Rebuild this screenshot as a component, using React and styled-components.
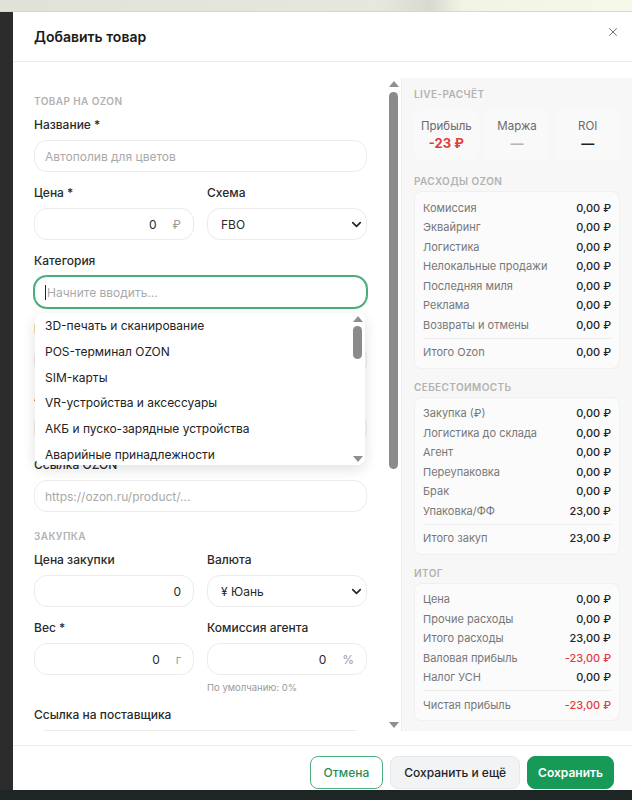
import React from 'react'
import styled, { createGlobalStyle } from 'styled-components'
import { X, ChevronDown } from 'lucide-react'

const GlobalStyle = createGlobalStyle`
  body {
    margin: 0;
    background: #2b2b2b;
    font-family: Inter, "Noto Sans", "Liberation Sans", sans-serif;
    color: #1f1f1f;
  }
  * { box-sizing: border-box; }
`

const Page = styled.div`
  width: 632px;
  height: 800px;
  display: flex;
  flex-direction: column;
  overflow: hidden;
`

const TopStrip = styled.div`
  height: 12px;
  flex-shrink: 0;
  background: linear-gradient(90deg, #e0e2d8 0%, #e6e8dd 60%, #d8dacf 68%, #f1f3e4 73%, #f6f8ea 100%);
  border-bottom: 1px solid #d6d8cf;
`

const Middle = styled.div`
  display: flex;
  height: 778px;
  flex-shrink: 0;
  overflow: hidden;
`

const Backdrop = styled.div`
  width: 13px;
  flex-shrink: 0;
  background: #2c2c2c;
`

const BottomStrip = styled.div`
  flex: 1;
  background: #1d2525;
`

const Modal = styled.div`
  flex: 1;
  min-width: 0;
  background: #fff;
  display: flex;
  flex-direction: column;
`

const Header = styled.div`
  height: 50px;
  flex-shrink: 0;
  display: flex;
  align-items: center;
  justify-content: space-between;
  padding: 0 12px 0 21px;
  border-bottom: 1px solid #ececec;
`

const Title = styled.h2`
  margin: 0;
  font-size: 14px;
  font-weight: 600;
  color: #1a1a1a;
`

const CloseButton = styled.button`
  border: none;
  background: none;
  padding: 0;
  margin-bottom: 9px;
  color: #666;
  display: flex;
  cursor: pointer;
`

const Body = styled.div`
  display: flex;
  height: 683px;
  flex-shrink: 0;
  padding: 16px 0 14px;
`

const FormArea = styled.div`
  width: 388px;
  flex-shrink: 0;
  display: flex;
`

const FormContent = styled.div`
  flex: 1;
  min-width: 0;
  overflow: hidden;
  padding: 16px 19px 0 21px;
  display: flex;
  flex-direction: column;
  gap: 17px;
`

/* scrollbar drawn by hand: the page is shot with native bars hidden */
const Rail = styled.div`
  width: 15px;
  flex-shrink: 0;
  display: flex;
  flex-direction: column;
  align-items: center;
  padding: 3px 0;
  background: ${p => p.$bg || '#fff'};
`

const Arrow = styled.span`
  width: 0;
  height: 0;
  flex-shrink: 0;
  border-left: 5px solid transparent;
  border-right: 5px solid transparent;
  ${p => p.$down ? 'border-top: 6px solid #8f8f8f;' : 'border-bottom: 6px solid #8f8f8f;'}
`

const Track = styled.div`
  flex: 1;
  width: 100%;
  display: flex;
  justify-content: center;
  padding-top: ${p => p.$offset}px;
`

const Thumb = styled.div`
  width: 9px;
  height: ${p => p.$size}px;
  border-radius: 5px;
  background: #8b8b8b;
`

const Section = styled.div`
  display: flex;
  flex-direction: column;
`

const SectionTitle = styled.div`
  font-size: 10px;
  line-height: 14px;
  font-weight: 600;
  letter-spacing: 0.4px;
  text-transform: uppercase;
  color: #b2b2b2;
  margin-bottom: ${p => p.$tight ? 3 : 9}px;
`

const Fields = styled.div`
  display: flex;
  flex-direction: column;
  gap: 13px;
`

const TwoCols = styled.div`
  display: grid;
  grid-template-columns: minmax(0, 1fr) minmax(0, 1fr);
  gap: 13px;
  align-items: start;
`

const Field = styled.div`
  display: flex;
  flex-direction: column;
  position: relative;
  min-width: 0;
`

const Label = styled.label`
  font-size: 12px;
  line-height: 16px;
  font-weight: 500;
  color: #2a2a2a;
  margin-bottom: 7px;
  white-space: nowrap;
`

const InputShell = styled.div`
  height: 32px;
  display: flex;
  align-items: center;
  padding: 0 12px 0 10px;
  border: 1px solid ${p => p.$focused ? '#48ad7d' : '#ebebeb'};
  box-shadow: ${p => p.$focused ? '0 0 0 1px #48ad7d' : 'none'};
  border-radius: 13px;
  background: #fff;
  font-size: 12px;
`

const TextInput = styled.input`
  flex: 1;
  width: 0;
  min-width: 0;
  border: none;
  outline: none;
  background: transparent;
  font: inherit;
  color: #2a2a2a;
  text-align: ${p => p.$align || 'left'};
  padding: 0;
  &::placeholder { color: #a9a9a9; }
`

const Suffix = styled.span`
  color: #9b9b9b;
  margin-left: 16px;
  font-size: 12px;
`

const Caret = styled.span`
  width: 1px;
  height: 15px;
  background: #222;
  margin-right: 1px;
`

const Placeholder = styled.span`
  color: #a9a9a9;
`

const SelectBox = styled.div`
  height: 32px;
  display: flex;
  align-items: center;
  justify-content: space-between;
  padding: 0 2px 0 13px;
  border: 1px solid #ebebeb;
  border-radius: 13px;
  font-size: 12px;
  color: #2a2a2a;
`

const Hint = styled.div`
  margin-top: 6px;
  font-size: 9.5px;
  line-height: 13px;
  color: #9a9a9a;
`

const Dropdown = styled.div`
  position: absolute;
  top: calc(100% + 5px);
  left: 1px;
  right: 2px;
  height: 152px;
  display: flex;
  overflow: hidden;
  background: #fff;
  border-radius: 8px;
  box-shadow: 0 4px 14px rgba(0, 0, 0, 0.13);
  z-index: 5;
`

const OptionList = styled.ul`
  flex: 1;
  min-width: 0;
  margin: 0;
  padding: 0;
  list-style: none;
  overflow: hidden;
`

const Option = styled.li`
  height: 25.8px;
  line-height: 25.8px;
  padding: 0 10px;
  font-size: 12px;
  color: #222;
  white-space: nowrap;
`

const Panel = styled.aside`
  flex: 1;
  min-width: 0;
  background: #f7f7f7;
  border-left: 1px solid #ececec;
  padding: 9px 12px 0;
  display: flex;
  flex-direction: column;
`

const Metrics = styled.div`
  display: grid;
  grid-template-columns: repeat(3, 1fr);
  gap: 6px;
  margin-bottom: 14px;
`

const Metric = styled.div`
  height: 50px;
  padding-top: 9px;
  border-radius: 8px;
  background: #f9f9f9;
  text-align: center;
`

const MetricLabel = styled.div`
  font-size: 11.5px;
  line-height: 14px;
  color: #6a6a6a;
`

const MetricValue = styled.div`
  margin-top: 1px;
  font-size: 13px;
  line-height: 18px;
  font-weight: 700;
  color: ${p => p.$tone === 'red' ? '#e23b3b' : p.$tone === 'muted' ? '#b5b5b5' : '#1f1f1f'};
`

const Card = styled.div`
  background: #fbfbfb;
  border: 1px solid #f0f0f0;
  border-radius: 8px;
  padding: 6px 8px;
  margin-bottom: 11px;
`

const Row = styled.div`
  display: flex;
  justify-content: space-between;
  align-items: center;
  height: 19.5px;
  font-size: 11px;
  ${p => p.$total && `
    border-top: 1px solid #ececec;
    margin-top: 3px;
    padding-top: 4px;
    height: 24px;
  `}
`

const RowLabel = styled.span`
  color: #777;
`

const RowValue = styled.span`
  font-weight: 500;
  color: ${p => p.$red ? '#e23b3b' : '#222'};
`

const Footer = styled.div`
  flex-shrink: 0;
  display: flex;
  justify-content: flex-end;
  gap: 7px;
  padding: 10px 18px;
  border-top: 1px solid #ececec;
`

const Button = styled.button`
  height: 33px;
  padding: 0 ${p => p.$variant === 'primary' ? 10 : 13}px;
  border-radius: 8px;
  font-family: inherit;
  font-size: 12px;
  font-weight: ${p => p.$variant === 'primary' ? 600 : 500};
  cursor: pointer;
  border: 1px solid ${p => p.$variant === 'ghost' ? '#4caf80' : p.$variant === 'primary' ? '#179a58' : '#e7e8eb'};
  background: ${p => p.$variant === 'primary' ? '#179a58' : p.$variant === 'ghost' ? '#fff' : '#f2f3f5'};
  color: ${p => p.$variant === 'primary' ? '#fff' : p.$variant === 'ghost' ? '#1f8f57' : '#1f1f1f'};
`

const categories = [
  '3D-печать и сканирование',
  'POS-терминал OZON',
  'SIM-карты',
  'VR-устройства и аксессуары',
  'АКБ и пуско-зарядные устройства',
  'Аварийные принадлежности',
  'Автозвук',
  'Автоинструменты',
  'Автокосметика и автохимия',
  'Автомобильные аксессуары',
  'Автомобильные коврики',
  'Автосвет',
]

const ozonCosts = [
  ['Комиссия', '0,00 ₽'],
  ['Эквайринг', '0,00 ₽'],
  ['Логистика', '0,00 ₽'],
  ['Нелокальные продажи', '0,00 ₽'],
  ['Последняя миля', '0,00 ₽'],
  ['Реклама', '0,00 ₽'],
  ['Возвраты и отмены', '0,00 ₽'],
]

const primeCosts = [
  ['Закупка (₽)', '0,00 ₽'],
  ['Логистика до склада', '0,00 ₽'],
  ['Агент', '0,00 ₽'],
  ['Переупаковка', '0,00 ₽'],
  ['Брак', '0,00 ₽'],
  ['Упаковка/ФФ', '23,00 ₽'],
]

const totals = [
  ['Цена', '0,00 ₽'],
  ['Прочие расходы', '0,00 ₽'],
  ['Итого расходы', '23,00 ₽'],
  ['Валовая прибыль', '-23,00 ₽', true],
  ['Налог УСН', '0,00 ₽'],
]

const ScrollRail = ({ offset, size, bg }) => (
  <Rail $bg={bg}>
    <Arrow />
    <Track $offset={offset}>
      <Thumb $size={size} />
    </Track>
    <Arrow $down />
  </Rail>
)

const NumberField = ({ label, suffix, hint }) => (
  <Field>
    <Label>{label}</Label>
    <InputShell>
      <TextInput $align="right" defaultValue="0" />
      {suffix && <Suffix>{suffix}</Suffix>}
    </InputShell>
    {hint && <Hint>{hint}</Hint>}
  </Field>
)

const SelectField = ({ label, value }) => (
  <Field>
    <Label>{label}</Label>
    <SelectBox>
      {value}
      <ChevronDown size={15} strokeWidth={2.6} color="#222" />
    </SelectBox>
  </Field>
)

const TextField = ({ label, placeholder }) => (
  <Field>
    <Label>{label}</Label>
    <InputShell>
      <TextInput placeholder={placeholder} />
    </InputShell>
  </Field>
)

const CostCard = ({ rows, total }) => (
  <Card>
    {rows.map(([name, value, red]) => (
      <Row key={name}>
        <RowLabel>{name}</RowLabel>
        <RowValue $red={red}>{value}</RowValue>
      </Row>
    ))}
    <Row $total>
      <RowLabel>{total[0]}</RowLabel>
      <RowValue $red={total[2]}>{total[1]}</RowValue>
    </Row>
  </Card>
)

export default function App() {
  return (
    <Page>
      <GlobalStyle />
      <TopStrip />
      <Middle>
        <Backdrop />
        <Modal>
          <Header>
            <Title>Добавить товар</Title>
            <CloseButton aria-label="Закрыть">
              <X size={14} strokeWidth={1.6} />
            </CloseButton>
          </Header>

          <Body>
            <FormArea>
              <FormContent>
                <Section>
                  <SectionTitle>Товар на Ozon</SectionTitle>
                  <Fields>
                    <TextField label="Название *" placeholder="Автополив для цветов" />
                    <TwoCols>
                      <NumberField label="Цена *" suffix="₽" />
                      <SelectField label="Схема" value="FBO" />
                    </TwoCols>
                    <Field>
                      <Label>Категория</Label>
                      <InputShell $focused>
                        <Caret />
                        <Placeholder>Начните вводить...</Placeholder>
                      </InputShell>
                      <Dropdown>
                        <OptionList>
                          {categories.map(c => <Option key={c}>{c}</Option>)}
                        </OptionList>
                        <ScrollRail offset={4} size={33} />
                      </Dropdown>
                    </Field>
                    <TwoCols>
                      <NumberField label="Комиссия категории" suffix="%" />
                      <NumberField label="Объём" suffix="л" />
                    </TwoCols>
                    <TextField label="Артикул продавца" placeholder="SKU-0001" />
                    <TextField label="Ссылка OZON" placeholder="https://ozon.ru/product/..." />
                  </Fields>
                </Section>

                <Section>
                  <SectionTitle>Закупка</SectionTitle>
                  <Fields>
                    <TwoCols>
                      <NumberField label="Цена закупки" />
                      <SelectField label="Валюта" value="¥ Юань" />
                    </TwoCols>
                    <TwoCols>
                      <NumberField label="Вес *" suffix="г" />
                      <NumberField label="Комиссия агента" suffix="%" hint="По умолчанию: 0%" />
                    </TwoCols>
                    <TextField label="Ссылка на поставщика" placeholder="https://1688.com/..." />
                  </Fields>
                </Section>
              </FormContent>
              <ScrollRail offset={5} size={377} />
            </FormArea>

            <Panel>
              <SectionTitle>Live-расчёт</SectionTitle>
              <Metrics>
                <Metric>
                  <MetricLabel>Прибыль</MetricLabel>
                  <MetricValue $tone="red">-23 ₽</MetricValue>
                </Metric>
                <Metric>
                  <MetricLabel>Маржа</MetricLabel>
                  <MetricValue $tone="muted">—</MetricValue>
                </Metric>
                <Metric>
                  <MetricLabel>ROI</MetricLabel>
                  <MetricValue>—</MetricValue>
                </Metric>
              </Metrics>

              <SectionTitle $tight>Расходы Ozon</SectionTitle>
              <CostCard rows={ozonCosts} total={['Итого Ozon', '0,00 ₽']} />

              <SectionTitle $tight>Себестоимость</SectionTitle>
              <CostCard rows={primeCosts} total={['Итого закуп', '23,00 ₽']} />

              <SectionTitle $tight>Итог</SectionTitle>
              <CostCard rows={totals} total={['Чистая прибыль', '-23,00 ₽', true]} />
            </Panel>
          </Body>

          <Footer>
            <Button $variant="ghost">Отмена</Button>
            <Button>Сохранить и ещё</Button>
            <Button $variant="primary">Сохранить</Button>
          </Footer>
        </Modal>
      </Middle>
      <BottomStrip />
    </Page>
  )
}
